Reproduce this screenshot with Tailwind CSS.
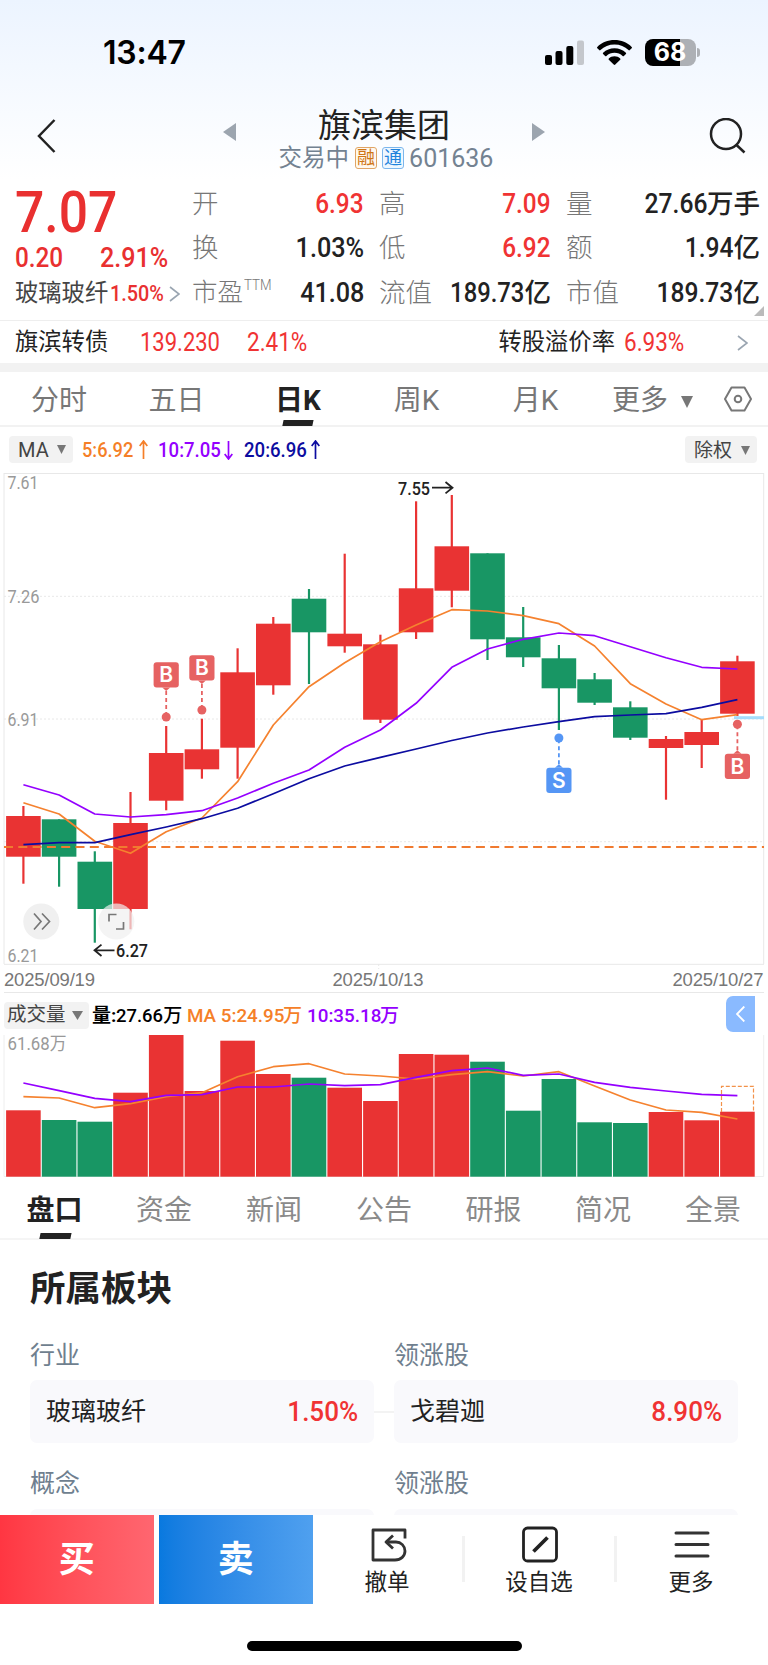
<!doctype html>
<html lang="zh-CN">
  <head>
    <meta charset="UTF-8" />
    <meta name="viewport" content="width=device-width, initial-scale=1.0" />
    <title>旗滨集团 601636</title>
    <script src="https://cdn.jsdelivr.net/npm/@tailwindcss/browser@4"></script>
  </head>
  <body
    class="w-[768px] h-[1665px] overflow-hidden bg-white text-[#222] font-['Roboto','Noto_Sans_CJK_SC',sans-serif] leading-none flex flex-col whitespace-nowrap"
  >
    <!-- Status bar + title -->
    <header class="h-[180px] shrink-0 bg-gradient-to-b from-[#ecf4ff] to-white">
      <div class="h-[104px] pl-[103px] pr-[68px] flex items-center justify-between text-black">
        <div class="text-[32px] font-semibold font-['Inter'] tracking-[-0.2px] pt-[2px]">13:47</div>
        <div class="flex items-center">
          <svg class="w-[39px] h-[25px]" viewBox="0 0 39 25">
            <rect x="0" y="15" width="7" height="10" rx="2" />
            <rect x="10.5" y="11" width="7" height="14" rx="2" />
            <rect x="21.3" y="6" width="7" height="19" rx="2" />
            <rect x="32" y="0.5" width="7" height="24.5" rx="2" fill="#c4c7cc" />
          </svg>
          <svg class="w-[35px] h-[25px] ml-[13px]" viewBox="0 0 35 25">
            <path d="M17.5 0C10.8 0 4.700 2.600 .3 6.900c-.4.4-.4.900 0 1.300l1.900 1.900c.4.400.9.400 1.300 0C7.200 6.500 12 4.500 17.500 4.500s10.300 2 14 5.600c.4.4.9.4 1.300 0l1.900-1.900c.4-.4.4-.9 0-1.300C30.300 2.600 24.200 0 17.500 0z" />
            <path d="M17.500 8.300c-4.400 0-8.400 1.700-11.400 4.500-.4.400-.4.900 0 1.300l2 1.900c.4.400.9.400 1.300 0 2.100-2 5-3.200 8.100-3.200s6 1.200 8.100 3.200c.4.400.9.400 1.300 0l2-1.900c.4-.4.4-.9 0-1.300-3-2.800-7-4.500-11.400-4.500z" />
            <path d="M17.500 16.300c-2.200 0-4.200.8-5.700 2.100-.4.400-.4.900 0 1.300l4.900 4.900c.4.400 1.200.400 1.600 0l4.900-4.900c.4-.4.4-.9 0-1.300-1.500-1.300-3.500-2.100-5.700-2.100z" />
          </svg>
          <div class="ml-[13px] w-[51px] h-[27px] rounded-[8px] bg-linear-to-r from-black from-68% to-[#adb0b5] to-68% flex items-center justify-center text-white text-[25px] font-bold font-['Inter']">68</div>
          <div class="ml-[1.500px] w-[3px] h-[9px] rounded-r-full bg-[#adb0b5]"></div>
        </div>
      </div>
      <div class="h-[76px] pl-[37px] flex">
        <svg class="w-[19px] h-[34px] mt-[15px]" viewBox="0 0 19 34" fill="none" stroke="#222" stroke-width="2.500">
          <path d="M17.500 1 2 17l15.500 16" />
        </svg>
        <svg class="w-[13px] h-[18px] ml-[167px] mt-[19px]" viewBox="0 0 13 18"><path d="M13 0v18L0 9z" fill="#9ca5af" /></svg>
        <div class="w-[296px] flex flex-col items-center">
          <h1 class="text-[33px] mt-[4px] leading-[35px]">旗滨集团</h1>
          <div class="flex items-center mt-[3px] ml-[4px] h-[24px] text-[23.500px] text-[#738291]">
            <span class="pt-[2px]">交易中</span>
            <span class="ml-[6px] size-[22px] border border-[#e0a566] rounded-[3px] text-[18px] leading-[19px] text-center text-[#cf7615] bg-[#fff8ee]">融</span>
            <span class="ml-[5px] size-[22px] border border-[#7cb6ec] rounded-[3px] text-[18px] leading-[19px] text-center text-[#1f83dc] bg-[#eef7ff]">通</span>
            <span class="ml-[5px] pt-[1px] text-[25px]">601636</span>
          </div>
        </div>
        <svg class="w-[13px] h-[18px] mt-[19px]" viewBox="0 0 13 18"><path d="M0 0v18l13-9z" fill="#9ca5af" /></svg>
        <svg class="w-[38px] h-[36px] ml-[164px] mt-[14px]" viewBox="0 0 38 36" fill="none" stroke="#222" stroke-width="2.500">
          <circle cx="17" cy="16" r="15" />
          <path d="m27.500 27 8 7.500" />
        </svg>
      </div>
    </header>

    <!-- Quote -->
    <section class="relative h-[140px] shrink-0 flex pl-[15px]">
      <div class="w-[177px] text-[#e93030]">
        <div class="h-[61px] flex items-center font-medium text-[58px] origin-left scale-x-89 pt-[3px]">7.07</div>
        <div class="h-[31px] flex items-center font-medium text-[27px] pt-[3px]">
          <span class="w-[85px] origin-left scale-x-90">0.20</span>
          <span class="origin-left scale-x-93">2.91%</span>
        </div>
        <div class="h-[42px] flex items-center pt-[2px]">
          <span class="text-[23.300px] text-[#444] w-[95px]">玻璃玻纤</span>
          <span class="text-[22px] font-medium w-[59px] origin-left scale-x-90">1.50%</span>
          <svg class="w-[11px] h-[16px]" viewBox="0 0 11 16" fill="none" stroke="#9aa5b1" stroke-width="1.600"><path d="m1 1 9 7-9 7" /></svg>
        </div>
      </div>
      <div class="pt-[1.500px] grid grid-cols-[172px_172px_194px] gap-x-[15px] auto-rows-[44.500px] text-[26.500px] font-medium [&>div]:flex [&>div]:items-center [&>div]:justify-between">
        <div><span class="font-light text-[#777]">开</span><span class="text-[#f03333] text-[28px] origin-right scale-x-87">6.93</span></div>
        <div><span class="font-light text-[#777]">高</span><span class="text-[#f03333] text-[28px] origin-right scale-x-87">7.09</span></div>
        <div><span class="font-light text-[#777]">量</span><span class="flex items-center"><span class="text-[28px] origin-right scale-x-88">27.66</span>万手</span></div>
        <div><span class="font-light text-[#777]">换</span><span class="text-[28px] origin-right scale-x-90">1.03%</span></div>
        <div><span class="font-light text-[#777]">低</span><span class="text-[#f03333] text-[28px] origin-right scale-x-87">6.92</span></div>
        <div><span class="font-light text-[#777]">额</span><span class="flex items-center"><span class="text-[28px] origin-right scale-x-88">1.94</span>亿</span></div>
        <div><span class="font-light text-[#777] text-[25.500px] flex">市盈<span class="text-[14.500px] -mt-[1px] ml-[1px] origin-left scale-x-92">TTM</span></span><span class="text-[28px] origin-right scale-x-90">41.08</span></div>
        <div><span class="font-light text-[#777]">流值</span><span class="flex items-center"><span class="text-[28px] origin-right scale-x-85">189.73</span>亿</span></div>
        <div><span class="font-light text-[#777]">市值</span><span class="flex items-center"><span class="text-[28px] origin-right scale-x-88">189.73</span>亿</span></div>
      </div>
      <svg class="absolute right-[4px] bottom-[4px] w-[10px] h-[10px]" viewBox="0 0 10 10"><path d="M10 0v10H0z" fill="#bbb" /></svg>
    </section>

    <!-- Convertible bond -->
    <section class="h-[43px] shrink-0 border-t border-[#eee] flex items-center pl-[15px] pr-[20px] pt-[1px] text-[23.300px]">
      <span class="w-[125px]">旗滨转债</span>
      <span class="w-[107px] text-[#f03333] text-[25px] origin-left scale-x-88">139.230</span>
      <span class="text-[#f03333] text-[25px] origin-left scale-x-90">2.41%</span>
      <span class="ml-auto">转股溢价率</span>
      <span class="ml-[9px] text-[#f03333] text-[25px] origin-left scale-x-90">6.93%</span>
      <svg class="ml-[46px] w-[11px] h-[16px]" viewBox="0 0 11 16" fill="none" stroke="#9aa5b1" stroke-width="1.600"><path d="m1 1 9 7-9 7" /></svg>
    </section>
    <div class="h-[9px] shrink-0 bg-[#f2f2f2]"></div>

    <!-- Period tabs -->
    <nav class="h-[55px] shrink-0 border-b-2 border-[#f2f2f2] flex items-center text-[28px] text-[#777] text-center pt-[4px]">
      <span class="w-[118px]">分时</span>
      <span class="w-[117px]">五日</span>
      <span class="relative w-[126px] font-bold text-[#222]">日K
        <i class="absolute left-[48px] top-[33px] w-[30px] h-[5.500px] bg-[#222] -skew-x-12"></i>
      </span>
      <span class="w-[111px]">周K</span>
      <span class="w-[127px]">月K</span>
      <span class="ml-[13px]">更多</span>
      <svg class="ml-[13px] mt-[3px] w-[12px] h-[12px]" viewBox="0 0 12 12"><path d="M0 0h12L6 12z" fill="#777" /></svg>
      <svg class="ml-[31px] -mt-[4px] w-[28px] h-[26px]" viewBox="0 0 28 26" fill="none" stroke="#777" stroke-width="2">
        <path d="M7.500 1.500h13L27 13l-6.500 11.500h-13L1 13z" stroke-linejoin="round" />
        <circle cx="14" cy="13" r="3.300" />
      </svg>
    </nav>

    <!-- Moving averages -->
    <div class="h-[46px] shrink-0 pl-[9px] pr-[11px] pt-[9px] flex items-start text-[20px] font-medium [&>*]:h-[27px] [&>*]:flex [&>*]:items-center">
      <span class="w-[64px] pl-[9px] rounded-[4px] bg-[#f2f2f2] text-[#444] font-normal">MA
        <svg class="ml-[8px] w-[9px] h-[9px]" viewBox="0 0 9 9"><path d="M0 0h9L4.500 9z" fill="#777" /></svg>
      </span>
      <span class="ml-[9px] w-[76px] text-[#f57f28]"><b class="font-medium w-[57px] origin-left scale-x-91">5:6.92</b>
        <svg class="w-[9px] h-[20px]" viewBox="0 0 9 20" fill="none" stroke="#f57f28" stroke-width="1.700"><path d="M4.500 19V1M.7 6l3.800-5 3.800 5" /></svg>
      </span>
      <span class="w-[86px] text-[#9400ff]"><b class="font-medium w-[66px] origin-left scale-x-93">10:7.05</b>
        <svg class="w-[9px] h-[20px]" viewBox="0 0 9 20" fill="none" stroke="#9400ff" stroke-width="1.700"><path d="M4.500 1v18M.7 14l3.800 5 3.800-5" /></svg>
      </span>
      <span class="text-[#0c0ca0]"><b class="font-medium w-[67px] origin-left scale-x-93">20:6.96</b>
        <svg class="w-[9px] h-[20px]" viewBox="0 0 9 20" fill="none" stroke="#0c0ca0" stroke-width="1.700"><path d="M4.500 19V1M.7 6l3.800-5 3.800 5" /></svg>
      </span>
      <span class="ml-auto w-[72px] pl-[9px] pt-[1px] rounded-[4px] bg-[#f2f2f2] text-[#444] font-normal text-[19px]">除权
        <svg class="ml-[9px] w-[9px] h-[9px]" viewBox="0 0 9 9"><path d="M0 0h9L4.500 9z" fill="#777" /></svg>
      </span>
    </div>

    <!-- Candlestick chart -->
    <svg class="w-[768px] h-[520px] shrink-0" viewBox="0 473 768 520">
      <g fill="none" stroke="#e8e8e8">
        <path d="M4 473.500h760M4 964.300h760M4 992.500h760M4 473v491M763.700 473v491" />
        <path d="M4 596.300h760M4 719h760M4 841.700h760M378.700 964v5" stroke-dasharray="2 2" />
      </g>
      <g fill="#999" font-size="18">
        <text x="7.500" y="489" textLength="31" lengthAdjust="spacingAndGlyphs">7.61</text>
        <text x="7.500" y="602.500" textLength="32" lengthAdjust="spacingAndGlyphs">7.26</text>
        <text x="7.500" y="725.500" textLength="31" lengthAdjust="spacingAndGlyphs">6.91</text>
        <text x="7.500" y="962" textLength="31" lengthAdjust="spacingAndGlyphs">6.21</text>
      </g>
      <g fill="#777" font-size="18.500" font-family="Liberation Sans">
        <text x="4" y="986" textLength="91">2025/09/19</text>
        <text x="332.500" y="986" textLength="91">2025/10/13</text>
        <text x="672.500" y="986" textLength="91">2025/10/27</text>
      </g>
      <g id="candles"></g>
      <path d="M4 847h760" fill="none" stroke="#f07a30" stroke-width="2" stroke-dasharray="9 5.300" />
      <path d="M734 717.700h30" stroke="#a5dcfb" stroke-width="3" />
      <g id="priceLines" fill="none" stroke-width="1.700" stroke-linejoin="round"></g>
      <g id="trades"></g>
      <g font-size="18" font-weight="500" fill="#222">
        <text x="398" y="494.500" textLength="32" lengthAdjust="spacingAndGlyphs">7.55</text>
        <text x="116" y="957" textLength="32" lengthAdjust="spacingAndGlyphs">6.27</text>
        <path d="M432 487.700h20M445.500 482l7 5.700-7 5.700M114.500 950.300h-20M101.500 944.600l-7 5.700 7 5.700" fill="none" stroke="#222" stroke-width="1.800" />
      </g>
      <g fill="none" stroke="#777" stroke-width="1.700">
        <circle cx="41.300" cy="921.500" r="18" fill="#f0f0f0" stroke="none" />
        <path d="m34 913.500 7 8-7 8M42 913.500l7.500 8-7.500 8" />
        <circle cx="116.300" cy="921.500" r="18" fill="#f0f0f0" fill-opacity=".7" stroke="none" />
        <path d="M109 921.500v-7h7.500M123.500 922v7H116" />
      </g>
    </svg>

    <!-- Volume -->
    <div class="h-[42px] shrink-0 pl-[4px] pr-[13px] pt-[2px] flex items-center text-[19px] font-medium">
      <span class="w-[85px] h-[27px] pl-[3px] rounded-[4px] bg-[#f2f2f2] text-[#444] font-normal text-[19.500px] flex items-center">成交量
        <svg class="ml-[6px] w-[11px] h-[9px]" viewBox="0 0 11 9"><path d="M0 0h11L5.500 9z" fill="#777" /></svg>
      </span>
      <span class="ml-[3px] w-[95px] text-black flex items-center"><b>量:</b><b class="font-medium w-[47px] origin-left scale-x-97">27.66</b>万</span>
      <span class="w-[120px] text-[#f57f28] flex items-center"><b class="font-medium w-[96px] origin-left scale-x-99">MA 5:24.95</b>万</span>
      <span class="text-[#9400ff] flex items-center"><b class="font-medium w-[73px] origin-left scale-x-99">10:35.18</b>万</span>
      <span class="ml-auto mt-[-3px] w-[29px] h-[36px] rounded-l-[7px] bg-[#8abaff] flex items-center justify-center">
        <svg class="w-[9px] h-[16px]" viewBox="0 0 9 16" fill="none" stroke="#fff" stroke-width="1.800"><path d="M8.300.5 1 8l7.300 7.500" /></svg>
      </span>
    </div>
    <svg class="w-[768px] h-[144px] shrink-0" viewBox="0 1035 768 144">
      <path d="M4 1035v141.500M763.700 1035v141.500H4" fill="none" stroke="#eee" />
      <text x="7.500" y="1050" font-size="18" fill="#999" textLength="59" lengthAdjust="spacingAndGlyphs">61.68万</text>
      <g id="volumes"></g>
      <path d="M721.500 1112v-25.700h32V1112" fill="none" stroke="#f2924a" stroke-width="1.200" stroke-dasharray="4 2" />
      <g id="volumeLines" fill="none" stroke-width="1.700" stroke-linejoin="round"></g>
    </svg>

    <!-- Section tabs -->
    <nav class="h-[61px] shrink-0 border-b-2 border-[#f5f5f5] flex text-[28px] leading-[64px] text-[#8a8a8a] text-center">
      <span class="relative w-[109px] font-bold text-[#222]">盘口
        <i class="absolute left-[40px] top-[54px] w-[31px] h-[5.500px] bg-[#222] -skew-x-12"></i>
      </span>
      <span class="w-[110px]">资金</span>
      <span class="w-[110px]">新闻</span>
      <span class="w-[110px]">公告</span>
      <span class="w-[109px]">研报</span>
      <span class="w-[110px]">简况</span>
      <span class="w-[110px]">全景</span>
    </nav>

    <!-- Sectors -->
    <section class="h-[275px] shrink-0 overflow-hidden px-[30px] text-[25px]">
      <h2 class="pt-[29px] text-[35.500px] leading-[40px] font-bold">所属板块</h2>
      <div class="mt-[34px] grid grid-cols-[344px_344px] gap-x-[20px] text-[#6f7f8f] leading-[26px]">
        <span>行业</span><span>领涨股</span>
      </div>
      <div class="mt-[11px] flex items-center">
        <div class="w-[344px] h-[63px] rounded-[7px] bg-[#f9f9fc] px-[16px] flex items-center justify-between text-[#222]">
          <span>玻璃玻纤</span><span class="text-[28px] text-[#f03333] font-medium origin-right scale-x-93">1.50%</span>
        </div>
        <div class="w-[20px] h-[2px] bg-[#f3f3f3]"></div>
        <div class="w-[344px] h-[63px] rounded-[7px] bg-[#f9f9fc] px-[16px] flex items-center justify-between text-[#222]">
          <span>戈碧迦</span><span class="text-[28px] text-[#f03333] font-medium origin-right scale-x-93">8.90%</span>
        </div>
      </div>
      <div class="mt-[28px] grid grid-cols-[344px_344px] gap-x-[20px] text-[#6f7f8f] leading-[26px]">
        <span>概念</span><span>领涨股</span>
      </div>
      <div class="mt-[12px] grid grid-cols-[344px_344px] gap-x-[20px]">
        <div class="h-[63px] rounded-[7px] bg-[#f9f9fc]"></div>
        <div class="h-[63px] rounded-[7px] bg-[#f9f9fc]"></div>
      </div>
    </section>

    <!-- Trade bar -->
    <footer class="h-[150px] shrink-0 bg-white">
      <div class="h-[90px] flex text-[22.500px]">
        <button class="w-[153.500px] h-[89px] pt-[1px] bg-linear-to-r from-[#ff3642] to-[#ff6670] text-white text-[36px] font-bold">买</button>
        <button class="ml-[5.500px] w-[153.500px] h-[89px] pt-[1px] bg-linear-to-r from-[#0879df] to-[#4fa0ef] text-white text-[36px] font-bold">卖</button>
        <div class="w-[149px] pt-[11px] flex flex-col items-center">
          <svg class="w-[36px] h-[38px] ml-[4px]" viewBox="0 0 36 38" fill="none" stroke="#333" stroke-width="2.800" stroke-linejoin="round">
            <path d="M34 12.500V4H2v30h22c6 0 10-4 10-9s-4-9-9-9H15" />
            <path d="m22 9.500-7 6.500 7 6.500" />
          </svg>
          <span class="mt-[7px]">撤单</span>
        </div>
        <div class="w-[3px] h-[46px] mt-[21px] bg-[#f2f2f2]"></div>
        <div class="w-[149px] pt-[11px] flex flex-col items-center">
          <svg class="w-[36px] h-[38px] ml-[1px]" viewBox="0 0 36 38" fill="none" stroke="#222">
            <rect x="1.500" y="2" width="33" height="33" rx="4" stroke-width="2.800" />
            <path d="m11.500 25.500 14-14" stroke-width="3.800" />
          </svg>
          <span class="mt-[7px]">设自选</span>
        </div>
        <div class="w-[3px] h-[46px] mt-[21px] bg-[#f2f2f2]"></div>
        <div class="w-[149px] pt-[11px] flex flex-col items-center">
          <svg class="w-[36px] h-[38px] ml-[1px]" viewBox="0 0 36 38" fill="none" stroke="#333" stroke-width="3" stroke-linecap="round">
            <path d="M2 7h32M2 18.500h32M2 30h32" />
          </svg>
          <span class="mt-[7px]">更多</span>
        </div>
      </div>
      <div class="mx-auto mt-[36px] w-[275px] h-[9.500px] rounded-full bg-black"></div>
    </footer>

    <script>
      const RED = "#e93333";
      const GREEN = "#189664";
      const PITCH = 35.7;
      const centre = (i) => 23.4 + PITCH * i;

      // high, body top, body bottom, low, colour, volume top
      const bars = [
        [806, 816, 856.7, 883.7, RED, 1110.3],
        [819.3, 819.3, 856.7, 886.7, GREEN, 1120],
        [851.3, 861.7, 909, 942.7, GREEN, 1121.7],
        [792, 823, 909, 929.3, RED, 1092.7],
        [726, 753, 800.7, 810.3, RED, 1035],
        [718.7, 749.3, 769.3, 778.7, RED, 1091],
        [648.3, 672.3, 747.7, 778.7, RED, 1040.7],
        [617, 623.7, 685.3, 694.7, RED, 1074],
        [589, 598.7, 632.3, 684, GREEN, 1077.7],
        [553.7, 633.7, 646.3, 652.7, RED, 1087.7],
        [634.7, 644.3, 719.7, 723, RED, 1101],
        [501.3, 588.3, 632.3, 639, RED, 1054],
        [495, 546.3, 590.7, 607.3, RED, 1054.7],
        [553.3, 553.3, 639.3, 660, GREEN, 1061.7],
        [607, 637.3, 657.3, 667, GREEN, 1110.7],
        [645, 658.3, 688.3, 730, GREEN, 1079],
        [673, 679.3, 702.7, 705, GREEN, 1122.3],
        [701.3, 707.3, 737.7, 740, GREEN, 1123],
        [736, 739, 748, 799.7, RED, 1112],
        [719.7, 732, 745, 768, RED, 1120.3],
        [655.7, 661.3, 713.7, 716, RED, 1111.7],
      ];
      const priceLines = {
        "#f5822f": [802.7, 814, 841.3, 853.3, 831.7, 818, 781.7, 725, 686.7, 662.7, 641.7, 625, 609.7, 611, 615.7, 623.7, 646, 683.7, 704, 719.7, 714.7],
        "#9400ff": [784.7, 795, 814, 817, 814.7, 810.7, 798, 783.3, 770, 747.3, 730, 703.3, 667.3, 649, 639.3, 633, 635.7, 646.7, 657.7, 667.3, 669],
        "#0c0ca0": [844.7, 842.7, 842.7, 834.7, 827, 818.7, 808.3, 793.7, 778.7, 766, 757.3, 749, 740.5, 733, 727, 721.7, 716.7, 715, 713.7, 707.3, 699.7],
      };
      const volumeLines = {
        "#f5822f": [1096.7, 1098, 1107.7, 1103.7, 1096.7, 1092.7, 1076.7, 1066.7, 1063.7, 1074, 1076, 1079, 1074.7, 1071.7, 1076, 1071.7, 1086, 1100, 1110, 1112.3, 1119],
        "#9400ff": [1083, 1090.7, 1098.3, 1101.7, 1095.3, 1094.7, 1087, 1087, 1084, 1085.7, 1084.7, 1077.3, 1070.7, 1068, 1075.3, 1074, 1082.3, 1087.3, 1091, 1094.3, 1095.7],
      };
      // bar index, letter, label top, dot y, colour
      const trades = [
        [4, "B", 662.3, 717, "#e66262"],
        [5, "B", 655.3, 710, "#e66262"],
        [15, "S", 767.7, 738, "#5596f5"],
        [20, "B", 753.7, 724.3, "#e66262"],
      ];

      const put = (id, html) => (document.getElementById(id).innerHTML = html);

      put("candles", bars.map(([h, t, b, l, c], i) =>
        `<path d="M${centre(i)} ${h}V${l}" stroke="${c}" stroke-width="2.2"/>` +
        `<rect x="${centre(i) - 17.3}" y="${t}" width="34.6" height="${b - t}" fill="${c}"/>`).join(""));

      put("volumes", bars.map(([, , , , c, v], i) =>
        `<rect x="${centre(i) - 17.3}" y="${v}" width="34.6" height="${1176.7 - v}" fill="${c}"/>`).join(""));

      const drawLines = (lines) => Object.entries(lines).map(([c, ys]) =>
        `<polyline stroke="${c}" points="${ys.map((y, i) => centre(i) + "," + y).join(" ")}"/>`).join("");
      put("priceLines", drawLines(priceLines));
      put("volumeLines", drawLines(volumeLines));

      put("trades", trades.map(([i, letter, top, dot, c]) => {
        const x = centre(i);
        const above = top < dot;
        const edge = above ? top + 25.3 : top;
        const tip = above ? edge + 3.5 : edge - 3.5;
        return `<path d="M${x} ${tip}V${dot}" stroke="${c}" stroke-width="1.8" stroke-dasharray="4 3"/>` +
          `<circle cx="${x}" cy="${dot}" r="4.5" fill="${c}"/>` +
          `<path d="M${x - 4} ${edge}L${x} ${tip}L${x + 4} ${edge}z" fill="${c}"/>` +
          `<rect x="${x - 12.6}" y="${top}" width="25.2" height="25.3" rx="3" fill="${c}"/>` +
          `<text x="${x}" y="${top + 20}" font-size="21" font-weight="600" font-family="Inter" fill="#fff" text-anchor="middle">${letter}</text>`;
      }).join(""));
    </script>
  </body>
</html>
